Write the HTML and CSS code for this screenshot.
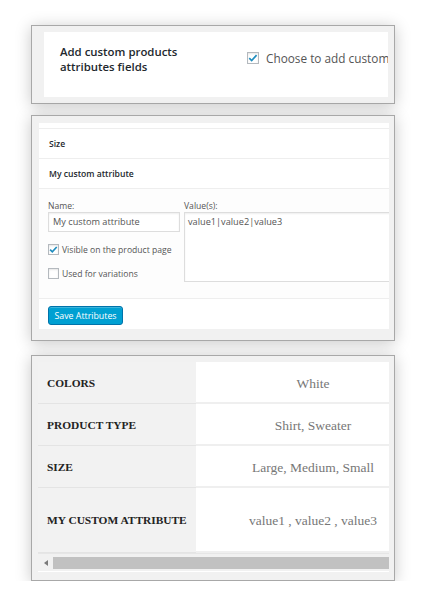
FILE: index.html
```html
<!DOCTYPE html>
<html lang="en">
<head>
<meta charset="utf-8">
<title>Custom product attributes</title>
<link rel="stylesheet" href="styles.css">
</head>
<body>
<div class="page">

  <section class="panel panel-settings">
    <div class="inner settings">
      <div class="settings-label">Add custom products attributes fields</div>
      <label class="settings-field">
        <span class="cb cb-lg"><svg viewBox="0 0 12 12" width="10" height="10"><path d="M1.5 6.2 L4.4 9 L10.3 2.6" fill="none" stroke="#1e8cbe" stroke-width="2"/></svg></span>
        <span class="settings-text">Choose to add custom products attributes fields</span>
      </label>
    </div>
  </section>

  <section class="panel panel-attrs">
    <div class="inner attrs">
      <div class="attr-row">Size</div>
      <div class="attr-row">My custom attribute</div>
      <div class="attr-form">
        <div class="attr-col">
          <div class="field-label">Name:</div>
          <div class="input">My custom attribute</div>
          <div class="check-row first">
            <span class="cb cb-sm"><svg viewBox="0 0 12 12" width="9" height="9"><path d="M1.5 6.2 L4.4 9 L10.3 2.6" fill="none" stroke="#1e8cbe" stroke-width="2.2"/></svg></span>
            <span>Visible on the product page</span>
          </div>
          <div class="check-row">
            <span class="cb cb-sm"></span>
            <span>Used for variations</span>
          </div>
        </div>
        <div class="attr-col">
          <div class="field-label">Value(s):</div>
          <div class="textarea">value1|value2|value3</div>
        </div>
      </div>
      <div class="attr-actions">
        <span class="button">Save Attributes</span>
      </div>
    </div>
  </section>

  <section class="panel panel-table">
    <div class="inner specs">
      <div class="spec-scroll">
        <div class="spec">
          <div class="spec-key">COLORS</div>
          <div class="spec-val">White</div>
          <div class="spec-key">PRODUCT TYPE</div>
          <div class="spec-val">Shirt, Sweater</div>
          <div class="spec-key">SIZE</div>
          <div class="spec-val">Large, Medium, Small</div>
          <div class="spec-key">MY CUSTOM ATTRIBUTE</div>
          <div class="spec-val">value1 , value2 , value3</div>
        </div>
      </div>
      <div class="scrollbar">
        <span class="scroll-arrow"></span>
        <span class="scroll-thumb"></span>
      </div>
    </div>
  </section>

</div>
</body>
</html>
```

FILE: styles.css
```css
* { box-sizing: border-box; margin: 0; padding: 0; }
html, body { background: #fff; }
body { font-family: "Open Sans", "Liberation Sans", sans-serif; color: #23282d; }

.page {
  padding: 25px 0 0 31px;
  display: flex;
  flex-direction: column;
  align-items: flex-start;
}

.panel {
  flex: none;
  width: 364px;
  height: 226px;
  border: 1px solid #a8a8a8;
  background: #f1f1f1;
  box-shadow: 0 2px 15px rgba(0, 0, 0, 0.22);
}
.panel-settings { height: 79px; padding: 6px 6px 6px 12px; }
.panel-attrs { margin-top: 11px; padding: 7px 5px 11px 7px; }
.panel-table { margin-top: 14px; padding: 6px 5px 8px 6px; }

.inner { height: 100%; background: #fff; overflow: hidden; }

/* checkboxes */
.cb {
  flex: none;
  display: flex;
  align-items: center;
  justify-content: center;
  background: #fff;
  border: 1px solid #b4b9be;
  box-shadow: inset 0 1px 2px rgba(0, 0, 0, 0.1);
}
.cb-lg { width: 12px; height: 12px; }
.cb-sm { width: 11px; height: 11px; }

/* panel 1 */
.settings {
  display: grid;
  grid-template-columns: 187px 1fr;
  padding: 12px 0 0 16px;
}
.settings-label {
  width: 160px;
  font-size: 11.4px;
  line-height: 15px;
  font-weight: 600;
  color: #23282d;
}
.settings-field {
  margin-top: 6px;
  display: flex;
  align-items: center;
  gap: 7px;
  height: 15px;
  white-space: nowrap;
  font-size: 11.8px;
  color: #555;
}

/* panel 2 */
.attrs { padding-top: 5px; display: flex; flex-direction: column; }
.attr-row {
  flex: none;
  height: 30px;
  border-top: 1px solid #eee;
  padding-left: 10px;
  display: flex;
  align-items: center;
  font-size: 8.6px;
  font-weight: 600;
  color: #23282d;
}
.attr-form {
  flex: none;
  height: 110px;
  border-top: 1px solid #eee;
  background: #fdfdfd;
  padding: 11px 0 0 9px;
  display: grid;
  grid-template-columns: 132px 250px;
  column-gap: 4px;
  font-size: 8.6px;
  color: #555;
}
.field-label { line-height: 12px; }
.input, .textarea {
  background: #fff;
  border: 1px solid #ddd;
  box-shadow: inset 0 1px 2px rgba(0, 0, 0, 0.07);
  color: #555;
  white-space: nowrap;
}
.input { height: 20px; line-height: 18px; padding: 0 4px; font-size: 9.2px; }
.textarea { height: 70px; padding: 2px 3px; line-height: 14px; font-size: 9.2px; }
.check-row {
  display: flex;
  align-items: center;
  gap: 3px;
  height: 11px;
  margin-top: 13px;
  white-space: nowrap;
}
.check-row.first { margin-top: 12px; }

.attr-actions {
  flex: 1;
  min-height: 0;
  border-top: 1px solid #eee;
  padding: 7px 9px 0;
}
.button {
  display: flex;
  align-items: center;
  justify-content: center;
  width: 75px;
  height: 19px;
  background: #00a0d2;
  border: 1px solid #0073aa;
  border-radius: 3px;
  box-shadow: inset 0 1px 0 rgba(120, 200, 230, 0.5);
  color: #fff;
  font-size: 8.8px;
}

/* panel 3 */
.specs { display: flex; flex-direction: column; }
.spec-scroll { flex: none; overflow: hidden; }
.spec {
  width: 392px;
  display: grid;
  grid-template-columns: 158px 234px;
  grid-template-rows: 42px 42px 42px 65px;
  font-family: "Liberation Serif", "Times New Roman", serif;
}
.spec-key {
  background: #f2f2f2;
  border-bottom: 1px solid #e4e4e4;
  padding-left: 9px;
  display: flex;
  align-items: center;
  font-size: 11.4px;
  font-weight: 700;
  color: #222;
}
.spec-val {
  background: #fff;
  border-bottom: 2px solid #efefef;
  padding-top: 3px;
  display: flex;
  align-items: center;
  justify-content: center;
  font-size: 13.5px;
  color: #777;
}
.scrollbar {
  flex: none;
  height: 18px;
  background: #f1f1f1;
  border-top: 1px solid #e6e6e6;
  display: flex;
  align-items: center;
}
.scroll-arrow {
  flex: none;
  width: 15px;
  display: flex;
  justify-content: center;
}
.scroll-arrow::before {
  content: "";
  border-right: 4px solid #7a7a7a;
  border-top: 3px solid transparent;
  border-bottom: 3px solid transparent;
}
.scroll-thumb {
  flex: 1;
  height: 12px;
  background: #c1c1c1;
}
```
